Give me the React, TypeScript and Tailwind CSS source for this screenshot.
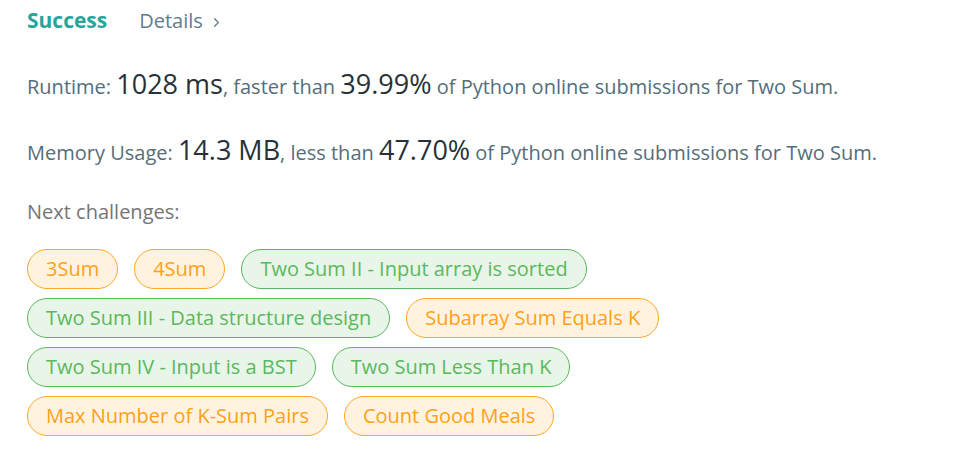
import React from 'react';
import { ChevronRight } from 'lucide-react';

type Tag = { name: string; level: 'easy' | 'medium' };

const challenges: Tag[] = [
  { name: '3Sum', level: 'medium' },
  { name: '4Sum', level: 'medium' },
  { name: 'Two Sum II - Input array is sorted', level: 'easy' },
  { name: 'Two Sum III - Data structure design', level: 'easy' },
  { name: 'Subarray Sum Equals K', level: 'medium' },
  { name: 'Two Sum IV - Input is a BST', level: 'easy' },
  { name: 'Two Sum Less Than K', level: 'easy' },
  { name: 'Max Number of K-Sum Pairs', level: 'medium' },
  { name: 'Count Good Meals', level: 'medium' },
];

const ChallengeTag = ({ name, level }: Tag) => {
  const cls =
    level === 'easy'
      ? 'bg-[#e8f5e9] border-[#5cb85c] text-[#5cb85c]'
      : 'bg-[#fff3e0] border-[#ffa726] text-[#ffa116]';
  return (
    <a className={`inline-flex items-center h-10 px-[18px] rounded-full border text-[20px] cursor-pointer ${cls}`}>
      {name}
    </a>
  );
};

export default function App() {
  return (
    <div className="bg-white w-[979px] h-[450px] px-[27px] font-['Open_Sans',sans-serif]">
      <div className="flex items-center gap-[32px] h-[42px]">
        <span className="text-[21px] font-bold text-[#26a69a]">Success</span>
        <span className="text-[20px] text-[#607d8b] flex items-center gap-[6px]">
          Details <ChevronRight size={15} strokeWidth={2} className="mt-[2px]" />
        </span>
      </div>

      <div className="mt-[22px] text-[20px] text-[#546e7a] leading-[40px]">
        Runtime: <span className="text-[27px] text-[#263238]">1028 ms</span>, faster than{' '}
        <span className="text-[27px] text-[#263238]">39.99%</span> of Python online submissions for Two Sum.
      </div>

      <div className="mt-[23px] text-[20px] text-[#546e7a] leading-[40px]">
        Memory Usage: <span className="text-[27px] text-[#263238]">14.3 MB</span>, less than{' '}
        <span className="text-[27px] text-[#263238]">47.70%</span> of Python online submissions for Two Sum.
      </div>

      <div className="mt-[24px] text-[20px] text-[#757575]">Next challenges:</div>

      <div className="mt-[22px] flex flex-wrap gap-x-4 gap-y-[9px] w-[720px]">
        {challenges.map((c) => (
          <ChallengeTag key={c.name} {...c} />
        ))}
      </div>
    </div>
  );
}
